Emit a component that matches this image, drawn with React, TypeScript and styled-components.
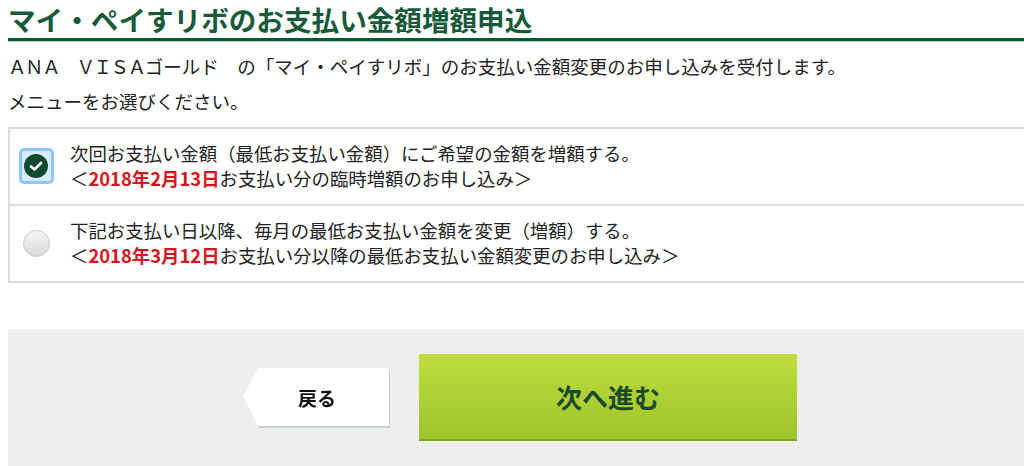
import React, { useState } from "react";
import styled, { createGlobalStyle } from "styled-components";

const GlobalStyle = createGlobalStyle`
  html, body {
    margin: 0;
    padding: 0;
    overflow: hidden;
    background: #fff;
  }
  body {
    font-family: "Noto Sans CJK JP", "Noto Sans", sans-serif;
    color: #222;
  }
`;

const Page = styled.div`
  width: 1024px;
  margin-left: 8px;
  height: 466px;
  display: flex;
  flex-direction: column;
`;

const Title = styled.h1`
  margin: 0;
  font-size: 27.6px;
  line-height: 38px;
  font-weight: 700;
  color: #165a3b;
  border-bottom: 3px solid #0e5532;
  box-shadow: 0 1px 0 #a9c8b7;
  white-space: nowrap;
`;

const Lead = styled.p<{ gap: number }>`
  margin: ${(p) => p.gap}px 0 0;
  font-size: 18.5px;
  line-height: 26px;
  white-space: nowrap;
`;

const Latin = styled.span`
  letter-spacing: -1.4px;
`;

const OptionList = styled.ul`
  list-style: none;
  margin: 13px 0 0;
  padding: 0;
  border: 2px solid #dcdcdc;
  border-right: none;
`;

const Option = styled.li`
  display: flex;
  align-items: center;
  padding: 12px 0 13px;
  cursor: pointer;

  & + & {
    border-top: 2px solid #dcdcdc;
  }
`;

const Marker = styled.span`
  width: 52px;
  padding-right: 8px;
  display: flex;
  justify-content: center;
  flex-shrink: 0;
`;

const CheckBox = styled.span`
  width: 29px;
  height: 30px;
  border-radius: 5px;
  border: 3px solid #8cc6fa;
  background: #d9ecfd;
  display: flex;
  align-items: center;
  justify-content: center;
`;

const CheckDot = styled.span`
  width: 24px;
  height: 24px;
  border-radius: 50%;
  background: #0f4a2f;
  display: flex;
  align-items: center;
  justify-content: center;
`;

const Radio = styled.span`
  width: 25px;
  height: 25px;
  border-radius: 50%;
  border: 1px solid #c4c4c4;
  background: linear-gradient(#f6f6f6, #dadada);
`;

const OptionText = styled.div`
  font-size: 18.4px;
  line-height: 25px;
  white-space: nowrap;
`;

const DateMark = styled.strong`
  color: #d7141c;
  font-weight: 700;
`;

const Footer = styled.div`
  margin-top: 46px;
  flex: 1;
  background: #eeeeee;
  display: flex;
  justify-content: center;
  align-items: flex-start;
  gap: 30px;
  padding-top: 25px;
`;

const BackWrap = styled.span`
  display: inline-block;
  margin-top: 14px;
  filter: drop-shadow(1px 2px 0 #c6d3ce);
`;

const BackButton = styled.button`
  display: block;
  width: 146px;
  height: 58px;
  border: none;
  background: #fff;
  clip-path: polygon(15px 0, 100% 0, 100% 100%, 15px 100%, 0 50%);
  font-family: inherit;
  font-size: 19px;
  font-weight: 700;
  color: #111;
  padding-left: 8px;
  cursor: pointer;
`;

const NextButton = styled.button`
  width: 378px;
  height: 87px;
  border: none;
  border-bottom: 2px solid #7ea424;
  background: linear-gradient(#c0dc3e, #9dc52b);
  font-family: inherit;
  font-size: 26px;
  font-weight: 700;
  color: #1c4b2b;
  cursor: pointer;
`;

const options = [
  {
    main: "次回お支払い金額（最低お支払い金額）にご希望の金額を増額する。",
    date: "2018年2月13日",
    rest: "お支払い分の臨時増額のお申し込み＞",
  },
  {
    main: "下記お支払い日以降、毎月の最低お支払い金額を変更（増額）する。",
    date: "2018年3月12日",
    rest: "お支払い分以降の最低お支払い金額変更のお申し込み＞",
  },
];

export default function App() {
  const [selected, setSelected] = useState(0);

  return (
    <Page>
      <GlobalStyle />
      <Title>マイ・ペイすリボのお支払い金額増額申込</Title>
      <Lead gap={12}>
        <Latin>ＡＮＡ　ＶＩＳＡ</Latin>ゴールド　の「マイ・ペイすリボ」のお支払い金額変更のお申し込みを受付します。
      </Lead>
      <Lead gap={9}>メニューをお選びください。</Lead>
      <OptionList>
        {options.map((o, i) => (
          <Option key={o.date} onClick={() => setSelected(i)}>
            <Marker>
              {selected === i ? (
                <CheckBox>
                  <CheckDot>
                    <svg width="14" height="11" viewBox="0 0 14 11">
                      <path
                        d="M2 5.5 L5.5 8.5 L12 2"
                        fill="none"
                        stroke="#fff"
                        strokeWidth="2.6"
                        strokeLinecap="round"
                        strokeLinejoin="round"
                      />
                    </svg>
                  </CheckDot>
                </CheckBox>
              ) : (
                <Radio />
              )}
            </Marker>
            <OptionText>
              {o.main}
              <br />＜<DateMark>{o.date}</DateMark>
              {o.rest}
            </OptionText>
          </Option>
        ))}
      </OptionList>
      <Footer>
        <BackWrap>
          <BackButton>戻る</BackButton>
        </BackWrap>
        <NextButton>次へ進む</NextButton>
      </Footer>
    </Page>
  );
}
